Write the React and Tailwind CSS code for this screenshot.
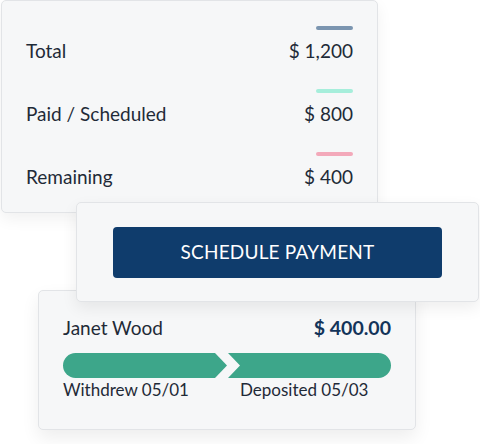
export default function App() {
  const rows = [
    { label: "Total", amount: "$ 1,200", color: "bg-[#7b95b0]" },
    { label: "Paid / Scheduled", amount: "$ 800", color: "bg-[#a6eedb]" },
    { label: "Remaining", amount: "$ 400", color: "bg-[#f3a9ba]" },
  ];
  return (
    <div className="w-[480px] h-[444px] bg-white overflow-hidden font-['Lato','Noto_Sans',sans-serif] text-[#1f2a37]">
      <div className="ml-[1px] w-[377px] h-[213px] rounded-[5px] border border-[#e2e4e7] bg-[#f6f7f8] shadow-[0_6px_16px_rgba(0,0,0,0.06)] pt-[25px] px-[24px] flex flex-col gap-[26px]">
        {rows.map((r) => (
          <div key={r.label} className="flex flex-col">
            <div className={`self-end w-[37px] h-[4px] rounded-full ${r.color}`} />
            <div className="mt-[9px] flex justify-between text-[19px] leading-[24px]">
              <span>{r.label}</span>
              <span>{r.amount}</span>
            </div>
          </div>
        ))}
      </div>
      <div className="relative z-10 -mt-[11px] ml-[76px] w-[403px] h-[100px] rounded-[5px] border border-[#e2e4e7] bg-[#f6f7f8] shadow-[0_6px_16px_rgba(0,0,0,0.07)] pt-[24px] pl-[36px]">
        <div className="w-[329px] h-[51px] rounded-[4px] bg-[#0f3c6c] flex items-center justify-center text-white text-[19px] tracking-[0.2px]">
          SCHEDULE PAYMENT
        </div>
      </div>
      <div className="-mt-[12px] ml-[38px] w-[378px] h-[140px] rounded-[5px] border border-[#e2e4e7] bg-[#f6f7f8] shadow-[0_8px_18px_rgba(0,0,0,0.07)] pt-[25px] px-[24px]">
        <div className="flex justify-between items-center text-[19px] leading-[24px]">
          <span>Janet Wood</span>
          <span className="font-bold text-[19.5px] text-[#13345a]">$ 400.00</span>
        </div>
        <svg className="mt-[13px] block" width="328" height="25" viewBox="0 0 328 25">
          <path d="M12.5 0 H152 L164 12.5 L152 25 H12.5 A12.5 12.5 0 0 1 12.5 0 Z" fill="#3da68a" />
          <path d="M165 0 H315.5 A12.5 12.5 0 0 1 315.5 25 H165 L177 12.5 Z" fill="#3da68a" />
        </svg>
        <div className="flex text-[17px] leading-[24px]">
          <span className="w-[177px]">Withdrew 05/01</span>
          <span>Deposited 05/03</span>
        </div>
      </div>
    </div>
  );
}
